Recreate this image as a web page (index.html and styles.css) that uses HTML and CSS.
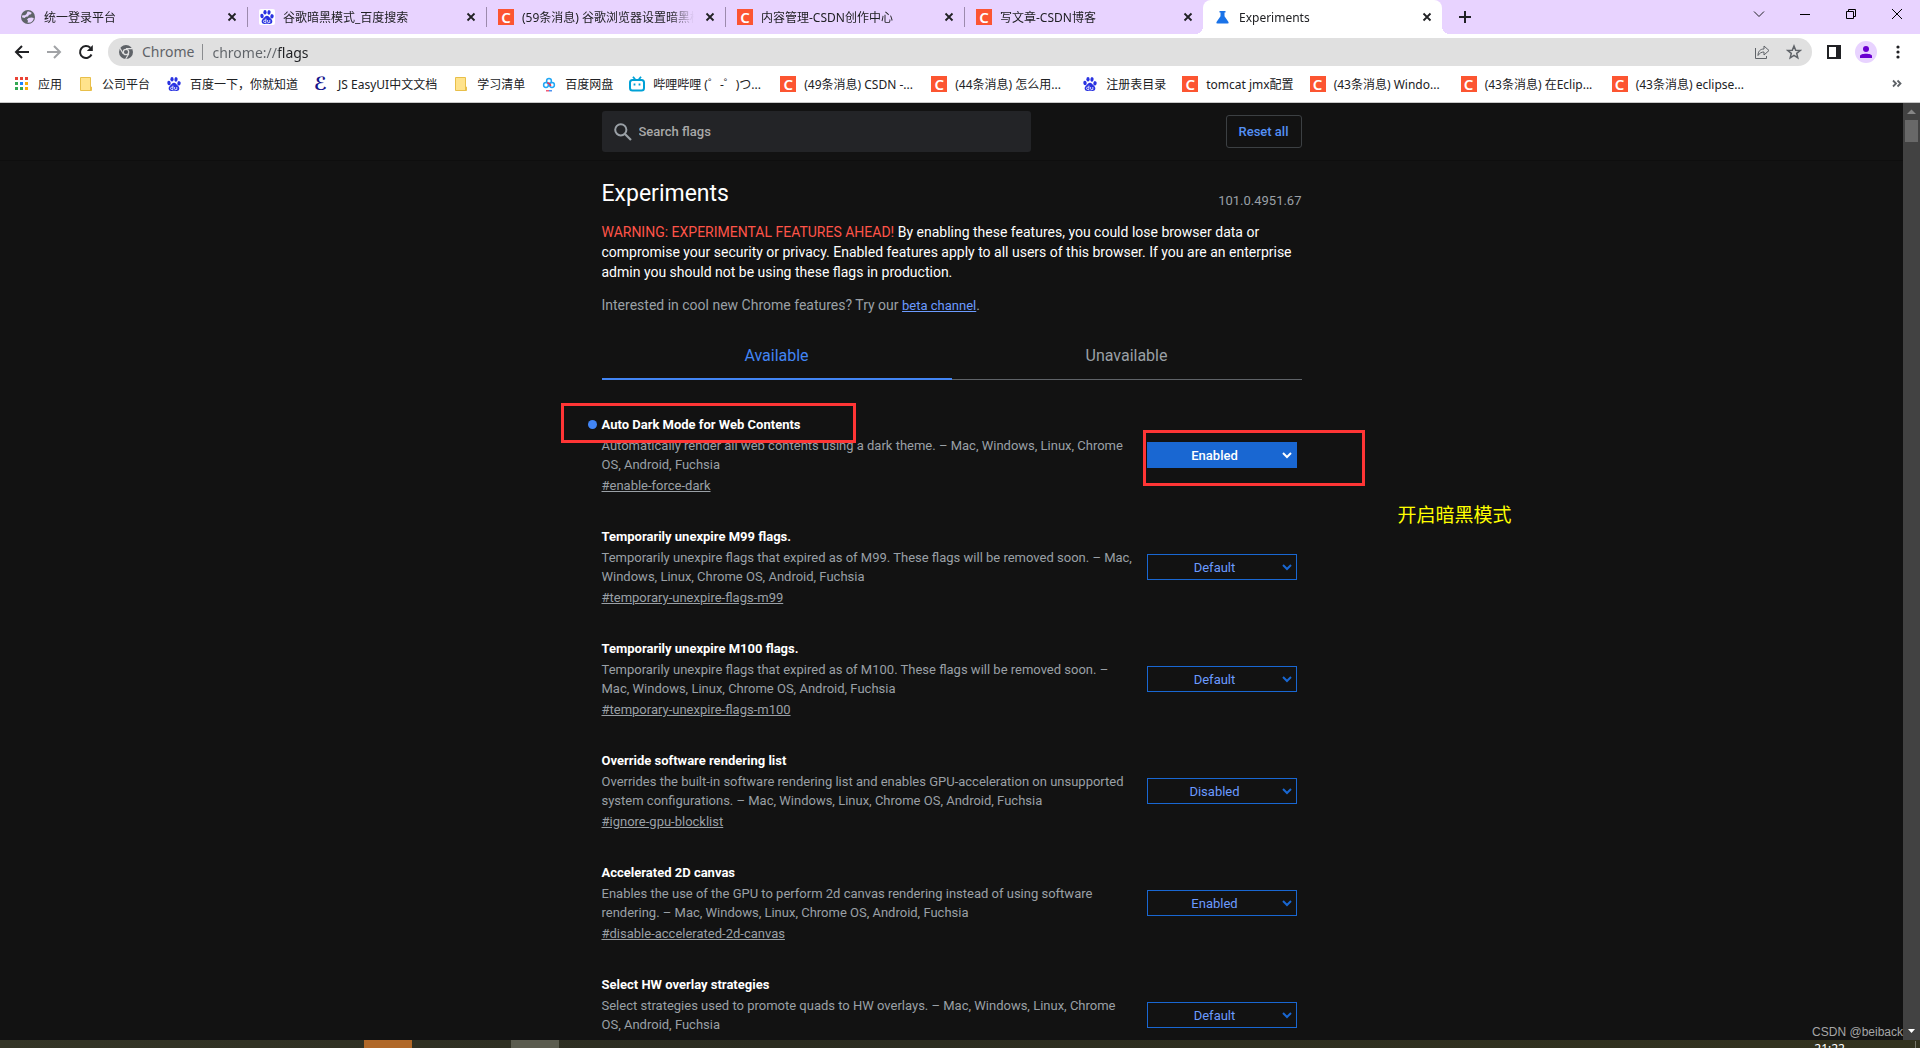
FILE: index.html
```html
<!DOCTYPE html>
<html lang="zh-Hans">
<head>
  <meta charset="UTF-8">
  <meta name="viewport" content="width=device-width, initial-scale=1.0">
  <title>Experiments</title>
  <link rel="stylesheet" href="styles.css">
</head>
<body>
  <!-- shared icons -->
  <svg class="sprite" aria-hidden="true">
    <symbol id="i-close" viewBox="0 0 16 16"><path d="M4.5 4.5l7 7M11.5 4.5l-7 7" stroke="#202124" stroke-width="1.8" fill="none"/></symbol>
    <symbol id="i-paw" viewBox="0 0 16 16">
      <g fill="#2932e1">
        <ellipse cx="3" cy="7" rx="1.7" ry="2.3" transform="rotate(-10 3 7)"/>
        <ellipse cx="6" cy="3.3" rx="1.6" ry="2.3"/>
        <ellipse cx="10" cy="3.4" rx="1.6" ry="2.3" transform="rotate(10 10 3.4)"/>
        <ellipse cx="13" cy="7.3" rx="1.7" ry="2.2" transform="rotate(10 13 7.3)"/>
        <path d="M8 6.8c1.6 0 2.2 1.2 3.2 2.3 1.100 1.100 2.500 2 2.100 3.900-.4 1.700-1.700 2-2.900 1.900-1.600-.1-3.200-.1-4.800 0-1.200.1-2.500-.2-2.900-1.900-.4-1.900 1-2.800 2.100-3.900C5.800 8 6.400 6.800 8 6.800z"/>
      </g>
      <path d="M6.900 9.600v3.900H5.700a1.100 1.100 0 010-2.300h1.200M8.600 11v1.800q0 .7.700.7h1.500V11" stroke="#fff" stroke-width=".8" fill="none"/>
    </symbol>
    <symbol id="i-folder" viewBox="0 0 16 16"><path d="M2.500 1.500h10v9.500h1v3.500h-11z" fill="#ffe38c" stroke="#e8bf4a"/><path d="M12.500 11v3.500" stroke="#e8bf4a"/></symbol>
    <symbol id="i-arrow" viewBox="0 0 10 8"><path d="M1 2l4 4 4-4" stroke="currentColor" stroke-width="2" fill="none"/></symbol>
  </svg>

  <nav class="tab-strip" aria-label="Tabs">
    <div class="tab">
      <svg class="icon" viewBox="0 0 16 16"><circle cx="8" cy="8" r="7" fill="#5f6368"/><path d="M7.500 2.500c2 0 3.500.6 4.300 1.500l-1.300 1.500-1.500.2L8 7.500l-2 .3L4.500 9 2 8.300c0 0 0-1 .5-2l2.500 0L6.500 5zM8.500 9l3-.5 2.300.5c-.3 2-1.500 3.600-3.300 4.400l-3 .3.500-2-1-1.200z" fill="#e8d3ff"/></svg>
      <a href="#" class="tab-title">统一登录平台</a>
      <button class="tab-close" aria-label="Close"><svg class="icon"><use href="#i-close"/></svg></button>
    </div>
    <div class="tab">
      <svg class="icon white"><use href="#i-paw"/></svg>
      <a href="#" class="tab-title">谷歌暗黑模式_百度搜索</a>
      <button class="tab-close" aria-label="Close"><svg class="icon"><use href="#i-close"/></svg></button>
    </div>
    <div class="tab">
      <span class="csdn">C</span>
      <a href="#" class="tab-title">(59条消息) 谷歌浏览器设置暗黑模式</a>
      <button class="tab-close" aria-label="Close"><svg class="icon"><use href="#i-close"/></svg></button>
    </div>
    <div class="tab">
      <span class="csdn">C</span>
      <a href="#" class="tab-title">内容管理-CSDN创作中心</a>
      <button class="tab-close" aria-label="Close"><svg class="icon"><use href="#i-close"/></svg></button>
    </div>
    <div class="tab">
      <span class="csdn">C</span>
      <a href="#" class="tab-title">写文章-CSDN博客</a>
      <button class="tab-close" aria-label="Close"><svg class="icon"><use href="#i-close"/></svg></button>
    </div>
    <div class="tab active">
      <svg class="icon" viewBox="0 0 16 16"><path d="M4.500 2h6v1.500h-1v3.800l4 5.700q.7 1.500-1 1.500h-10q-1.700 0-1-1.500l4-5.700V3.500h-1z" fill="#1a73e8"/></svg>
      <a href="#" class="tab-title">Experiments</a>
      <button class="tab-close" aria-label="Close"><svg class="icon"><use href="#i-close"/></svg></button>
    </div>
    <button class="new-tab" aria-label="New tab"><svg class="icon" viewBox="0 0 16 16"><path d="M8 2v12M2 8h12" stroke="#202124" stroke-width="2"/></svg></button>
    <div class="window-controls">
      <button aria-label="Search tabs"><svg class="icon" viewBox="0 0 16 16"><path d="M3 5.500l5 5 5-5" stroke="#202124" fill="none"/></svg></button>
      <button aria-label="Minimize"><svg class="icon" viewBox="0 0 16 16"><path d="M3 8.500h10" stroke="#000"/></svg></button>
      <button aria-label="Restore"><svg class="icon" viewBox="0 0 16 16"><path d="M3.500 5.500h7v7h-7zM5.500 5.500v-2h7v7h-2" stroke="#000" fill="none"/></svg></button>
      <button aria-label="Close window"><svg class="icon" viewBox="0 0 16 16"><path d="M3 3l10 10M13 3L3 13" stroke="#000"/></svg></button>
    </div>
  </nav>

  <div class="toolbar">
    <button class="tool" aria-label="Back"><svg class="icon" viewBox="0 0 16 16"><path d="M15 8H2M8 2L2 8l6 6" stroke="#202124" stroke-width="2" fill="none"/></svg></button>
    <button class="tool" aria-label="Forward"><svg class="icon" viewBox="0 0 16 16"><path d="M1 8h13M8 2l6 6-6 6" stroke="#a1a3a6" stroke-width="2" fill="none"/></svg></button>
    <button class="tool" aria-label="Reload"><svg class="icon" viewBox="0 0 16 16"><path d="M13.500 10.500a6 6 0 11-1.200-6.700" stroke="#202124" stroke-width="2" fill="none"/><path d="M14.800 1v6h-6z" fill="#202124"/></svg></button>
    <div class="omnibox">
      <svg class="icon" viewBox="0 0 16 16"><circle cx="8" cy="8" r="7" fill="#5f6368"/><circle cx="8" cy="8" r="2.700" fill="#5f6368" stroke="#e0e0e0" stroke-width="1.300"/><path d="M8 4.700h6.500M5.200 9.700L2 4.200M10.800 9.700L7.700 15" stroke="#e0e0e0" stroke-width="1.200"/></svg>
      <label for="address">Chrome</label>
      <input id="address" type="text" value="chrome://flags" spellcheck="false">
      <button class="omni-button" aria-label="Share"><svg class="icon" viewBox="0 0 16 16"><path d="M1.500 4v10.500h11V12M4 11.500c0-4 2-6.500 6-6.500V2l5 4.500-5 4.500V8C7.500 8 5.500 9 4 11.500z" stroke="#5f6368" fill="none"/></svg></button>
      <button class="omni-button" aria-label="Bookmark this tab"><svg class="icon" viewBox="0 0 16 16"><path d="M8 2l1.700 4.200 4.500.3-3.500 2.900 1.100 4.400L8 11.400l-3.800 2.400 1.100-4.400-3.500-2.900 4.500-.3z" stroke="#5f6368" stroke-width="1.500" fill="none"/></svg></button>
    </div>
    <button class="tool" aria-label="Side panel"><svg class="icon" viewBox="0 0 16 16"><path d="M1 1h14v14H1z" fill="#202124"/><path d="M3 3h7v10H3z" fill="#fff"/></svg></button>
    <button class="tool" aria-label="Profile"><svg class="avatar" viewBox="0 0 22 22"><circle cx="11" cy="11" r="11" fill="#e8d3ff"/><circle cx="11" cy="8" r="3" fill="#6a00d0"/><path d="M5 17v-2c0-3 12-3 12 0v2z" fill="#6a00d0"/></svg></button>
    <button class="tool" aria-label="Menu"><svg class="icon" viewBox="0 0 16 16" fill="#202124"><circle cx="8" cy="3" r="1.600"/><circle cx="8" cy="8" r="1.600"/><circle cx="8" cy="13" r="1.600"/></svg></button>
  </div>

  <nav class="bookmarks" aria-label="Bookmarks">
    <a href="#"><svg class="icon" viewBox="0 0 16 16"><path d="M1 1h3v3H1zM6 1h3v3H6zM11 1h3v3h-3z" fill="#ea4335"/><path d="M1 6h3v3H1zM1 11h3v3H1z" fill="#34a853"/><path d="M6 6h3v3H6z" fill="#1a83ff"/><path d="M11 6h3v3h-3zM6 11h3v3H6zM11 11h3v3h-3z" fill="#fbad05"/><path d="M6 11h3v3H6z" fill="#34a853"/></svg>应用</a>
    <a href="#"><svg class="icon"><use href="#i-folder"/></svg>公司平台</a>
    <a href="#"><svg class="icon"><use href="#i-paw"/></svg>百度一下，你就知道</a>
    <a href="#"><span class="script-e">ℰ</span>JS EasyUI中文文档</a>
    <a href="#"><svg class="icon"><use href="#i-folder"/></svg>学习清单</a>
    <a href="#"><svg class="icon" viewBox="0 0 16 16" fill="none" stroke-width="1.500"><circle cx="8" cy="5" r="2.400" stroke="#22a7f5"/><circle cx="5" cy="9" r="2.400" stroke="#22a7f5"/><circle cx="11" cy="9" r="2.400" stroke="#22a7f5"/><path d="M6.200 6.800q3 .5 3.500 3.200" stroke="#ee3355"/><path d="M5 14.800h3" stroke="#ee3355" stroke-width="1.200"/><path d="M8 14.800h3" stroke="#2277ee" stroke-width="1.200"/></svg>百度网盘</a>
    <a href="#" class="long"><svg class="icon" viewBox="0 0 16 16"><rect x="1" y="4" width="14" height="10.500" rx="2.500" fill="none" stroke="#00a1d6" stroke-width="2"/><path d="M4 .8l2.200 2.700M12 .8L9.800 3.500M5.500 7.500v2M10.500 7.500v2" stroke="#00a1d6" stroke-width="1.800"/></svg>哔哩哔哩 (゜-゜)つ...</a>
    <a href="#" class="long"><span class="csdn">C</span>(49条消息) CSDN -...</a>
    <a href="#" class="long"><span class="csdn">C</span>(44条消息) 怎么用...</a>
    <a href="#"><svg class="icon"><use href="#i-paw"/></svg>注册表目录</a>
    <a href="#"><span class="csdn">C</span>tomcat jmx配置</a>
    <a href="#" class="long"><span class="csdn">C</span>(43条消息) Windo...</a>
    <a href="#" class="long"><span class="csdn">C</span>(43条消息) 在Eclip...</a>
    <a href="#" class="long"><span class="csdn">C</span>(43条消息) eclipse...</a>
    <button class="more-bookmarks" aria-label="More bookmarks"><svg class="icon" viewBox="0 0 16 16"><path d="M4 4.500L7 7.500l-3 3M8.500 4.500l3 3-3 3" stroke="#5f6368" stroke-width="1.800" fill="none"/></svg></button>
  </nav>

  <div class="viewport">
    <main class="page">
      <header class="page-header">
        <div class="container header-row">
          <div class="search">
            <svg class="search-icon" viewBox="0 0 18 18"><circle cx="6.800" cy="6.800" r="5.600" stroke="#9aa0a6" stroke-width="2" fill="none"/><path d="M11 11l6 6" stroke="#9aa0a6" stroke-width="2.200"/></svg>
            <input type="text" placeholder="Search flags" aria-label="Search flags">
          </div>
          <button class="reset">Reset all</button>
        </div>
      </header>

      <div class="container">
        <div class="title-row">
          <h1>Experiments</h1>
          <span class="version">101.0.4951.67</span>
        </div>
        <p class="blurb"><span class="warning">WARNING: EXPERIMENTAL FEATURES AHEAD!</span> By enabling these features, you could lose browser data or compromise your security or privacy. Enabled features apply to all users of this browser. If you are an enterprise admin you should not be using these flags in production.</p>
        <p class="promo">Interested in cool new Chrome features? Try our <a href="#">beta channel</a>.</p>

        <div class="page-tabs">
          <button class="page-tab selected">Available</button>
          <button class="page-tab">Unavailable</button>
        </div>

        <section class="flag changed">
          <div class="flag-text">
            <h2><label for="f1">Auto Dark Mode for Web Contents</label></h2>
            <p>Automatically render all web contents using a dark theme. – Mac, Windows, Linux, Chrome OS, Android, Fuchsia</p>
            <a href="#enable-force-dark">#enable-force-dark</a>
          </div>
          <div class="picker">
            <select id="f1"><option>Default</option><option selected>Enabled</option><option>Disabled</option></select>
            <svg><use href="#i-arrow"/></svg>
          </div>
          <!-- notes drawn over the page -->
          <div class="mark mark-title"></div>
          <div class="mark mark-select"></div>
          <div class="note">开启暗黑模式</div>
        </section>

        <section class="flag">
          <div class="flag-text">
            <h2><label for="f2">Temporarily unexpire M99 flags.</label></h2>
            <p>Temporarily unexpire flags that expired as of M99. These flags will be removed soon. – Mac, Windows, Linux, Chrome OS, Android, Fuchsia</p>
            <a href="#temporary-unexpire-flags-m99">#temporary-unexpire-flags-m99</a>
          </div>
          <div class="picker">
            <select id="f2"><option>Default</option><option>Enabled</option><option>Disabled</option></select>
            <svg><use href="#i-arrow"/></svg>
          </div>
        </section>

        <section class="flag">
          <div class="flag-text">
            <h2><label for="f3">Temporarily unexpire M100 flags.</label></h2>
            <p>Temporarily unexpire flags that expired as of M100. These flags will be removed soon. – Mac, Windows, Linux, Chrome OS, Android, Fuchsia</p>
            <a href="#temporary-unexpire-flags-m100">#temporary-unexpire-flags-m100</a>
          </div>
          <div class="picker">
            <select id="f3"><option>Default</option><option>Enabled</option><option>Disabled</option></select>
            <svg><use href="#i-arrow"/></svg>
          </div>
        </section>

        <section class="flag">
          <div class="flag-text">
            <h2><label for="f4">Override software rendering list</label></h2>
            <p>Overrides the built-in software rendering list and enables GPU-acceleration on unsupported system configurations. – Mac, Windows, Linux, Chrome OS, Android, Fuchsia</p>
            <a href="#ignore-gpu-blocklist">#ignore-gpu-blocklist</a>
          </div>
          <div class="picker">
            <select id="f4"><option>Disabled</option><option>Enabled</option></select>
            <svg><use href="#i-arrow"/></svg>
          </div>
        </section>

        <section class="flag">
          <div class="flag-text">
            <h2><label for="f5">Accelerated 2D canvas</label></h2>
            <p>Enables the use of the GPU to perform 2d canvas rendering instead of using software rendering. – Mac, Windows, Linux, Chrome OS, Android, Fuchsia</p>
            <a href="#disable-accelerated-2d-canvas">#disable-accelerated-2d-canvas</a>
          </div>
          <div class="picker">
            <select id="f5"><option>Enabled</option><option>Disabled</option></select>
            <svg><use href="#i-arrow"/></svg>
          </div>
        </section>

        <section class="flag">
          <div class="flag-text">
            <h2><label for="f6">Select HW overlay strategies</label></h2>
            <p>Select strategies used to promote quads to HW overlays. – Mac, Windows, Linux, Chrome OS, Android, Fuchsia</p>
            <a href="#overlay-strategies">#overlay-strategies</a>
          </div>
          <div class="picker">
            <select id="f6"><option>Default</option></select>
            <svg><use href="#i-arrow"/></svg>
          </div>
        </section>
      </div>
    </main>

    <div class="scrollbar">
      <svg viewBox="0 0 17 17"><path d="M4 11l4.500-4.500L13 11z" fill="#868686"/></svg>
      <div class="thumb"></div>
      <svg class="scroll-down" viewBox="0 0 17 17"><path d="M5 6h7l-3.500 4z" fill="#fff"/></svg>
    </div>
    <div class="watermark">CSDN @beiback</div>
  </div>

  <footer class="taskbar">
    <span class="task task-active"></span>
    <span class="task"></span>
    <span class="clock">21:22</span>
  </footer>
</body>
</html>
```

FILE: styles.css
```css
* {
  box-sizing: border-box;
}

body {
  margin: 0;
  height: 100vh;
  display: flex;
  flex-direction: column;
  overflow: hidden;
  background: #fff;
  color: #202124;
  font-family: "Noto Sans", "Noto Sans CJK SC", sans-serif;
  font-size: 12px;
}

button {
  display: flex;
  align-items: center;
  justify-content: center;
  padding: 0;
  border: none;
  background: none;
  font: inherit;
  cursor: pointer;
}

.sprite {
  position: absolute;
  width: 0;
  height: 0;
}

.icon {
  width: 16px;
  height: 16px;
  flex: none;
}

.white {
  background: #fff;
  border-radius: 2px;
}

.csdn {
  width: 16px;
  height: 16px;
  flex: none;
  background: #fc5531;
  color: #fff;
  font-size: 15px;
  font-weight: 600;
  line-height: 16px;
  text-align: center;
}

/* browser tabs */
.tab-strip {
  display: flex;
  flex: none;
  height: 34px;
  padding-left: 8px;
  background: #e8d3ff;
}

.tab {
  display: flex;
  align-items: center;
  flex: 0 1 239px;
  min-width: 0;
  gap: 8px;
  padding: 0 7px 0 12px;
  position: relative;
}

.tab:not(.active)::after {
  content: "";
  position: absolute;
  right: -1px;
  top: 7px;
  width: 1px;
  height: 20px;
  background: #9c8aad;
}

.tab:nth-child(5)::after {
  display: none;
}

.tab.active {
  background: #fff;
  border-radius: 8px 8px 0 0;
}

.tab.active::before,
.tab.active::after {
  content: "";
  position: absolute;
  bottom: 0;
  width: 8px;
  height: 8px;
}

.tab.active::before {
  left: -8px;
  background: radial-gradient(circle at 0 0, #e8d3ff 8px, #fff 8px);
}

.tab.active::after {
  right: -8px;
  background: radial-gradient(circle at 100% 0, #e8d3ff 8px, #fff 8px);
}

.tab-title {
  flex: 1;
  overflow: hidden;
  white-space: nowrap;
  color: #202124;
  text-decoration: none;
  -webkit-mask-image: linear-gradient(to left, transparent, #000 24px);
  mask-image: linear-gradient(to left, transparent, #000 24px);
}

.new-tab {
  width: 46px;
}

.window-controls {
  display: flex;
  margin-left: auto;
  height: 28px;
}

.window-controls button {
  width: 46px;
}

/* toolbar */
.toolbar {
  display: flex;
  align-items: center;
  flex: none;
  gap: 4px;
  height: 36px;
  padding: 0 8px;
}

.tool {
  width: 28px;
  height: 28px;
}

.avatar {
  width: 22px;
  height: 22px;
}

.omnibox {
  display: flex;
  align-items: center;
  flex: 1;
  height: 28px;
  margin: 0 4px;
  padding: 0 2px 0 10px;
  border-radius: 14px;
  background: #e0e0e0;
  font-size: 14px;
}

.omnibox label {
  margin-left: 8px;
  padding-right: 8px;
  border-right: 1px solid #8a8c8f;
  color: #5f6368;
  line-height: 16px;
}

.omnibox input {
  flex: 1;
  padding: 0 0 0 9px;
  border: none;
  outline: none;
  font: inherit;
  background: linear-gradient(to right, #5f6368 76px, #202124 76px);
  -webkit-background-clip: text;
  background-clip: text;
  color: transparent;
}

.omni-button {
  width: 32px;
  height: 28px;
}

/* bookmarks */
.bookmarks {
  display: flex;
  align-items: center;
  flex: none;
  gap: 16px;
  height: 33px;
  padding: 0 15px 4px 14px;
  border-bottom: 1px solid #c8c8c8;
}

.bookmarks a {
  display: flex;
  align-items: center;
  gap: 8px;
  color: #202124;
  text-decoration: none;
  white-space: nowrap;
}

.bookmarks .long {
  min-width: 135px;
}

.script-e {
  width: 16px;
  color: #14148c;
  font-family: "DejaVu Sans", sans-serif;
  font-size: 18px;
  font-weight: bold;
  line-height: 16px;
}

.more-bookmarks {
  margin-left: auto;
}

/* flags page */
.viewport {
  display: flex;
  flex: 1;
  min-height: 0;
  position: relative;
}

.page {
  flex: 1;
  overflow: hidden;
  background: #121212;
  color: #9aa0a6;
  font-family: Roboto, sans-serif;
  font-size: 13px;
}

.container {
  max-width: 700px;
  margin: 0 auto;
}

.page-header {
  padding: 8px 0;
  border-bottom: 1px solid #0e0e0e;
}

.header-row {
  display: flex;
  align-items: center;
  justify-content: space-between;
}

.search {
  display: flex;
  align-items: center;
  width: 429px;
  height: 41px;
  padding-left: 12px;
  border-radius: 3px;
  background: #232427;
}

.search-icon {
  width: 18px;
  height: 18px;
}

.search input {
  flex: 1;
  padding: 0 7px;
  border: none;
  outline: none;
  background: none;
  color: #fff;
  font: inherit;
  font-weight: 500;
}

.search input::placeholder {
  color: #a9a9a9;
}

.reset {
  height: 33px;
  padding: 0 12px;
  border: 1px solid #3c4043;
  border-radius: 3px;
  color: #5490f5;
  font-weight: 500;
}

.title-row {
  display: flex;
  align-items: flex-end;
  justify-content: space-between;
  margin-top: 19px;
}

h1 {
  margin: 0;
  color: #fff;
  font-size: 23px;
  font-weight: 400;
  line-height: 28px;
}

.version {
  line-height: 14px;
}

.blurb {
  margin: 14px 0 13px;
  color: #fff;
  font-size: 14px;
  line-height: 20px;
}

.warning {
  color: #ff5449;
}

.promo {
  margin: 0;
  font-size: 14px;
  line-height: 20px;
}

.promo a {
  color: #6c9bff;
  font-size: 13px;
}

.page-tabs {
  display: flex;
  margin-top: 16px;
}

.page-tab {
  flex: 1;
  height: 48px;
  border-bottom: 1px solid #5f6368;
  color: #9aa0a6;
  font-size: 16px;
}

.page-tab.selected {
  border-bottom: 2px solid #4285f4;
  color: #4285f4;
}

.flag {
  display: flex;
  align-items: center;
  justify-content: space-between;
  margin: 35px 0 32px;
  padding-right: 5px;
  position: relative;
}

.flag + .flag {
  margin-top: 0;
}

.flag-text {
  width: 534px;
  line-height: 19px;
}

.flag h2 {
  margin: 0;
  color: #fff;
  font-size: 13px;
  font-weight: 700;
}

.changed h2::before {
  content: "";
  position: absolute;
  left: -14px;
  top: 5px;
  width: 9px;
  height: 9px;
  border-radius: 50%;
  background: #4285f4;
}

.flag p {
  margin: 2px 0;
}

.flag a {
  display: block;
  color: #9aa0a6;
}

.picker {
  display: flex;
  position: relative;
  color: #1967d2;
}

.picker select {
  width: 150px;
  height: 26px;
  padding: 0 14px 0 0;
  border: 1px solid #1967d2;
  border-radius: 0;
  outline: none;
  appearance: none;
  background: #121212;
  color: #6c9bff;
  font-family: inherit;
  font-size: 13px;
  text-align: center;
  text-align-last: center;
}

.picker svg {
  position: absolute;
  right: 5px;
  top: 9px;
  width: 10px;
  height: 8px;
  pointer-events: none;
}

.changed .picker {
  color: #fff;
}

.changed select {
  background: #1967d2;
  color: #fff;
  font-weight: 500;
}

.mark {
  position: absolute;
  border: 3px solid #ff3535;
  pointer-events: none;
}

.mark-title {
  left: -41px;
  top: -12px;
  width: 295px;
  height: 40px;
}

.mark-select {
  right: -63px;
  top: 15px;
  width: 222px;
  height: 56px;
}

.note {
  position: absolute;
  left: 796px;
  top: 85px;
  color: #ff0;
  font-family: "Noto Sans CJK SC", sans-serif;
  font-size: 19px;
  line-height: 28px;
  white-space: nowrap;
}

/* scrollbar and taskbar */
.scrollbar {
  display: flex;
  flex-direction: column;
  width: 17px;
  background: #424242;
}

.scrollbar svg {
  width: 17px;
  height: 17px;
}

.thumb {
  height: 22px;
  margin: 0 2px;
  background: #686868;
}

.scrollbar .scroll-down {
  margin-top: auto;
}

.watermark {
  position: absolute;
  right: 17px;
  bottom: 0;
  color: #a6a6a6;
  font-family: "Liberation Sans", sans-serif;
  font-size: 12px;
  line-height: 16px;
}

.taskbar {
  display: flex;
  flex: none;
  gap: 99px;
  height: 8px;
  padding-left: 364px;
  overflow: hidden;
  background: linear-gradient(to right, #343526, #2b2c20 40%, #33331f);
}

.task {
  width: 48px;
  background: #5b5c4f;
}

.task-active {
  background: #b06828;
}

.clock {
  margin: 1px 4px 0 auto;
  padding-right: 70px;
  border-right: 1px solid #77776a;
  color: #fff;
  line-height: 16px;
}
```
